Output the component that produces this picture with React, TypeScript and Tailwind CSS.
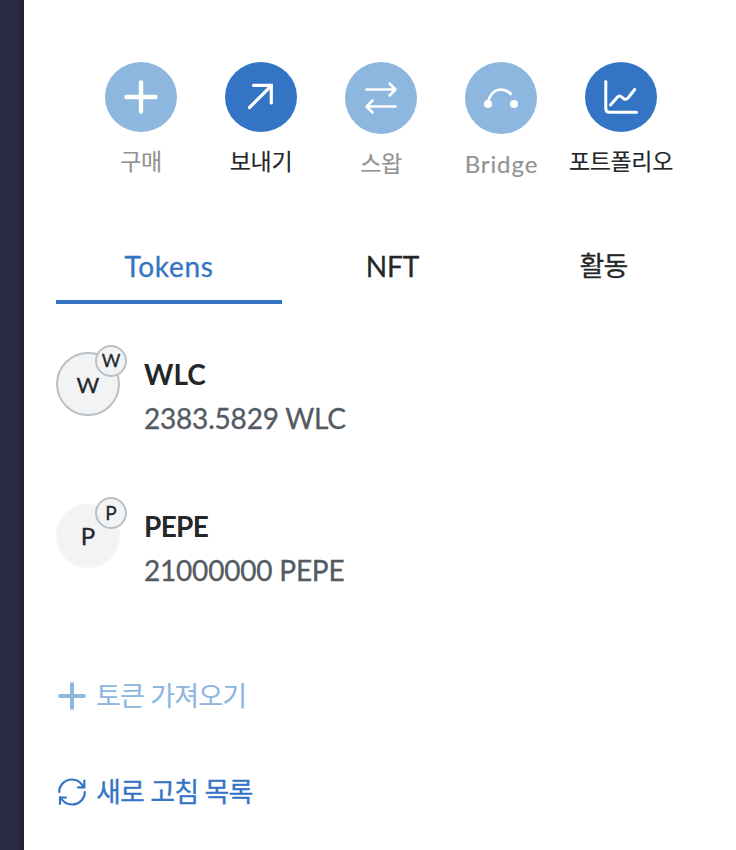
import type { ReactNode } from "react";
import clsx from "clsx";

const PlusIcon = ({ className, strokeWidth }: { className: string; strokeWidth: number }) => (
  <svg viewBox="0 0 34 34" className={className} fill="none" stroke="currentColor" strokeWidth={strokeWidth} strokeLinecap="round">
    <path d="M17 2.5v29M2.5 17h29" />
  </svg>
);

const SendIcon = () => (
  <svg viewBox="0 0 36 36" className="size-9" fill="none" stroke="currentColor" strokeWidth="3.2" strokeLinecap="round">
    <path d="M10.5 6.300H28.300V24" strokeLinejoin="miter" />
    <path d="M6.500 28.500 28 7" />
  </svg>
);

const SwapIcon = () => (
  <svg viewBox="0 0 36 36" className="size-9" fill="none" stroke="currentColor" strokeWidth="2.5" strokeLinecap="round" strokeLinejoin="round">
    <path d="M3.500 9.500h29M26.500 3.500l6 6-6 6" />
    <path d="M32.500 26.500H4M9.500 20.500l-6 6 6 6" />
  </svg>
);

const BridgeIcon = () => (
  <svg viewBox="0 0 36 36" className="size-9" fill="none" stroke="currentColor" strokeWidth="2.8">
    <path d="M5 23C6.500 14.500 11.500 9.700 18 9.700C22 9.700 25.500 11.300 28.500 14.700" />
    <circle cx="5" cy="24" r="4" fill="currentColor" stroke="none" />
    <circle cx="31" cy="24" r="4" fill="currentColor" stroke="none" />
  </svg>
);

const PortfolioIcon = () => (
  <svg viewBox="0 0 36 36" className="size-9" fill="none" stroke="currentColor" strokeWidth="3" strokeLinecap="round" strokeLinejoin="round">
    <path d="M2.800 2.500V29.500Q2.800 33.300 6.600 33.300H33.500" />
    <path d="M7.500 26 14.500 18Q16.500 15.800 18.800 18L20.500 19.500Q22.800 21.300 25 19L31.700 10.500" />
  </svg>
);

const RefreshIcon = () => (
  <svg viewBox="0 0 28 28" className="size-7" fill="none" stroke="currentColor" strokeWidth="2.2" strokeLinecap="round">
    <path d="M1.200 14C1.200 7 7 1.500 14 1.500C19 1.500 23 4.300 25.500 9" />
    <path d="M26.300 2.500V9.300H20" strokeLinejoin="miter" />
    <path d="M26.800 14C26.800 21 21 26.500 14 26.500C9 26.500 5 23.700 2.500 19.500" />
    <path d="M2 26V19.500H8" strokeLinejoin="miter" />
  </svg>
);

type Action = { label: string; icon: ReactNode; disabled?: boolean; circle: string; text: string };

const koreanLabel = "mt-[16px] text-[23px] tracking-[-0.4px]";

const actions: Action[] = [
  { label: "구매", icon: <PlusIcon className="size-[34px]" strokeWidth={4.4} />, disabled: true, circle: "h-[70px]", text: koreanLabel },
  { label: "보내기", icon: <SendIcon />, circle: "h-[70px]", text: koreanLabel },
  { label: "스왑", icon: <SwapIcon />, disabled: true, circle: "h-[72px]", text: koreanLabel },
  { label: "Bridge", icon: <BridgeIcon />, disabled: true, circle: "h-[72px]", text: "mt-[17px] text-[24px] tracking-[0.9px] -mr-[0.9px]" },
  { label: "포트폴리오", icon: <PortfolioIcon />, circle: "h-[70px]", text: koreanLabel },
];

const tokens = [
  { symbol: "WLC", balance: "2383.5829 WLC", bordered: true, symbolClass: "" },
  { symbol: "PEPE", balance: "21000000 PEPE", bordered: false, symbolClass: "tracking-[-0.7px]" },
];

const ActionButton = ({ label, icon, disabled, circle, text }: Action) => (
  <button type="button" className="flex w-[120px] flex-col items-center">
    <span
      className={clsx(
        "flex w-[72px] items-center justify-center rounded-[50%] text-white",
        circle,
        disabled ? "bg-[#8db7df]" : "bg-[#3375c4]"
      )}
    >
      {icon}
    </span>
    <span className={clsx("leading-[26px] whitespace-nowrap [-webkit-text-stroke:0.15px]", text, disabled ? "text-[#929394]" : "text-[#24272a]")}>
      {label}
    </span>
  </button>
);

const TokenRow = ({ symbol, balance, bordered, symbolClass }: (typeof tokens)[number]) => (
  <div className="flex h-[152px]">
    <div
      className={clsx(
        "relative flex size-16 items-center justify-center rounded-full bg-[#f2f3f5] text-[#24272a]",
        bordered ? "border-2 border-[#bbc0c5] text-[22px]" : "text-[24px]"
      )}
    >
      {symbol[0]}
      <span
        className={clsx(
          "absolute flex size-8 items-center justify-center rounded-full border-2 border-[#bbc0c5] bg-[#f2f3f5] pb-[2px] leading-none",
          bordered ? "-top-[9px] -right-[9px] text-[18px]" : "-top-[7px] -right-[7px] text-[19px]"
        )}
      >
        {symbol[0]}
      </span>
    </div>
    <div className="ml-6 text-[28px] leading-[44px]">
      <p className={clsx("font-bold text-[#24272a] [-webkit-text-stroke:0px]", symbolClass)}>{symbol}</p>
      <p className="tracking-[-0.2px] text-[#535a61]">{balance}</p>
    </div>
  </div>
);

const App = () => {
  return (
    <div className="flex h-[850px] w-[736px] overflow-hidden bg-white font-['Lato','Noto_Sans_CJK_KR',sans-serif] [-webkit-text-stroke:0.3px]">
      <div className="w-6 shrink-0 bg-linear-to-r from-[#292a45] from-70% to-[#222239]" />
      <main className="flex-1">
        <div className="flex h-[178px] pt-[62px] pl-[57px]">
          {actions.map((action) => (
            <ActionButton key={action.label} {...action} />
          ))}
        </div>

        <div className="mt-[50px] ml-8 flex h-[76px] text-[28px] leading-[76px] text-[#24272a]">
          <button type="button" className="w-[226px] border-b-4 border-[#3375c4] tracking-[0.7px] text-[#3375c4]">
            Tokens
          </button>
          <button type="button" className="w-[221px]">NFT</button>
          <button type="button" className="w-[201px] text-[27px] tracking-[-0.8px]">활동</button>
        </div>

        <div className="mt-12 ml-8">
          {tokens.map((token) => (
            <TokenRow key={token.symbol} {...token} />
          ))}
        </div>

        <div className="ml-[34px] flex flex-col items-start text-[27px] leading-[40px] tracking-[-0.8px] [word-spacing:1px]">
          <button type="button" className="mt-5 flex items-center gap-2.5 text-[#8db7df] [-webkit-text-stroke:0.1px]">
            <PlusIcon className="size-7" strokeWidth={4.8} />
            토큰 가져오기
          </button>
          <button type="button" className="mt-14 flex items-center gap-2.5 text-[#3375c4]">
            <RefreshIcon />
            새로 고침 목록
          </button>
        </div>
      </main>
    </div>
  );
};

export default App;
